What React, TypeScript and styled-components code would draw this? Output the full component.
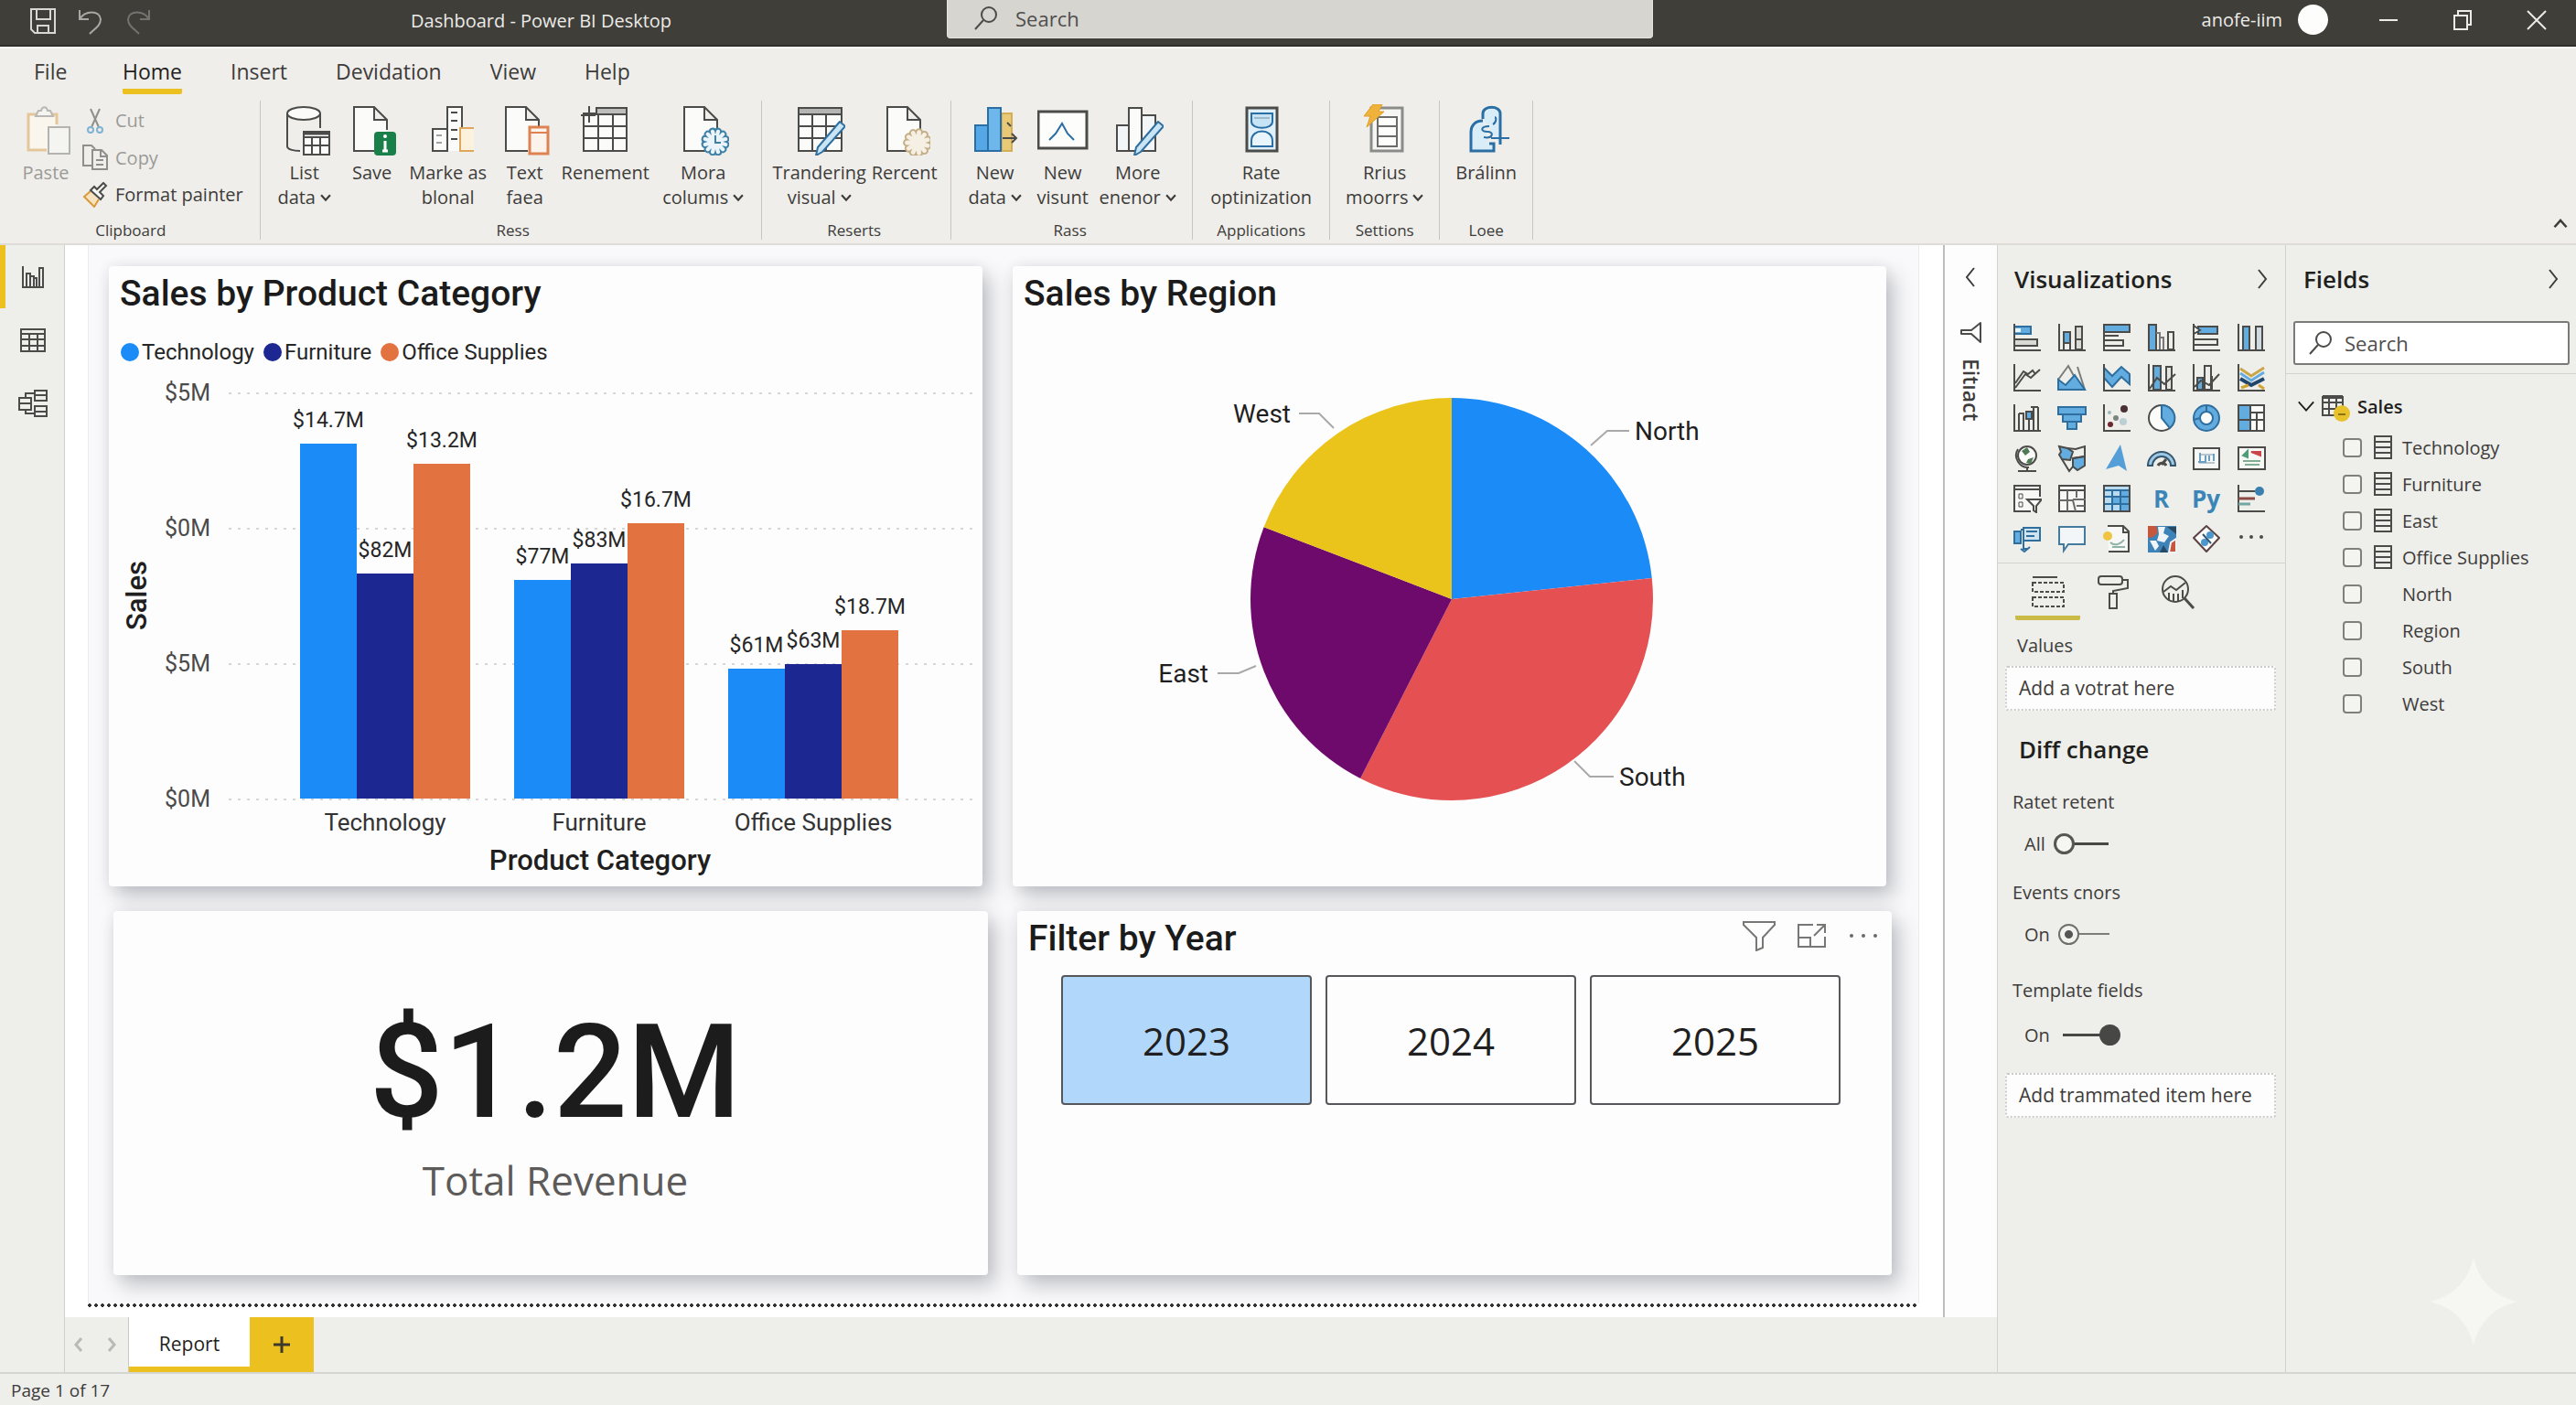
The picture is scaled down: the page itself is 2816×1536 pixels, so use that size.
import React from "react";
import styled, { createGlobalStyle, css } from "styled-components";

const ui = `"Open Sans", "Noto Sans", sans-serif`;
const din = `Roboto, "Liberation Sans", sans-serif`;

const c = {
  bar: "#3f3e39",
  panel: "#eeeeea",
  line: "#d2d2ce",
  ink: "#3d3c3a",
  dark: "#1f1f1e",
  muted: "#9b9b98",
  yellow: "#ebc01f",
  blue: "#1a8bf7",
  navy: "#1c2791",
  orange: "#e2723f",
  icon: "#4b4b49",
  sky: "#62acdf",
  steel: "#2f6f9f",
};

const Global = createGlobalStyle`
  *, *::before, *::after { box-sizing: border-box; }
  body { margin: 0; background: ${c.panel}; color: ${c.ink}; font-family: ${ui}; font-size: 20px; }
  h1, h2, h3, p, ul { margin: 0; padding: 0; font-weight: 400; }
  ul { list-style: none; }
  button, input { font: inherit; color: inherit; }
  button { border: 0; padding: 0; background: none; cursor: pointer; }
  svg { display: block; flex: none; }
`;

const Shell = styled.div`
  display: flex;
  flex-direction: column;
  min-height: 100vh;
`;

/* ---------- title bar ---------- */
const TitleBar = styled.header`
  display: grid;
  grid-template-columns: 449fr 586fr 772fr 1009fr;
  height: 51px;
  background: ${c.bar};
  border-bottom: 2px solid #2e2e2a;
  color: #ecebe8;
`;
const Quick = styled.div`
  display: flex;
  align-items: center;
  gap: 22px;
  padding: 0 0 3px 32px;
`;
const AppTitle = styled.h1`
  font-size: 20px;
  line-height: 46px;
`;
const TopSearch = styled.label`
  display: flex;
  align-items: center;
  gap: 18px;
  height: 42px;
  padding: 0 28px 2px;
  background: #d6d5d0;
  border: 1px solid #e6e5e1;
  border-top: 0;
  border-radius: 0 0 4px 4px;
  color: ${c.ink};
`;
const TextInput = styled.input`
  flex: 1;
  min-width: 0;
  border: 0;
  outline: 0;
  padding: 0;
  background: transparent;
  font-size: 22px;
  line-height: 30px;
  &::placeholder { color: #4f4e4c; opacity: 1; }
`;
const Account = styled.div`
  display: flex;
  align-items: center;
  justify-content: flex-end;
  padding: 0 3px 6px 0;
`;
const Avatar = styled.span`
  width: 33px;
  height: 33px;
  margin: 0 25px 0 17px;
  border-radius: 50%;
  background: #fdfdfb;
`;
const WinBtn = styled.button`
  display: grid;
  place-items: center;
  width: 81px;
  height: 42px;
`;

/* ---------- ribbon ---------- */
const Ribbon = styled.div`
  background: #efeeea;
  border-top: 2px solid #f8f8f4;
  border-bottom: 2px solid #dddcd7;
`;
const Tabs = styled.nav`
  display: flex;
  gap: 53px;
  height: 57px;
  padding-left: 37px;
`;
const Tab = styled.button<{ $on?: boolean }>`
  min-width: 44px;
  height: 50px;
  padding-top: 6px;
  text-align: left;
  font-size: 23px;
  line-height: 32px;
  border-bottom: 6px solid ${(p) => (p.$on ? c.yellow : "transparent")};
  border-radius: 2px;
  color: ${(p) => (p.$on ? c.dark : c.ink)};
  font-weight: ${(p) => (p.$on ? 500 : 400)};
`;
const Groups = styled.div`
  display: flex;
  align-items: flex-start;
  padding-bottom: 4px;
`;
const Group = styled.section<{ $l: number; $r: number }>`
  display: flex;
  flex-direction: column;
  justify-content: space-between;
  height: 152px;
  padding: 4px ${(p) => p.$r}px 0 ${(p) => p.$l}px;
  border-right: 1px solid #c6c5c1;
`;
const GroupRow = styled.div`
  display: flex;
`;
const GroupName = styled.h2`
  font-size: 17px;
  line-height: 20px;
  text-align: center;
`;
const Tool = styled.button<{ $w: number; $off?: boolean }>`
  display: flex;
  flex-direction: column;
  align-items: center;
  gap: 5px;
  width: ${(p) => p.$w}px;
  font-size: 20px;
  line-height: 27px;
  white-space: nowrap;
  color: ${(p) => (p.$off ? c.muted : c.ink)};
`;
const ToolLine = styled.span`
  display: flex;
  align-items: center;
  justify-content: center;
  gap: 5px;
`;
const ClipList = styled.div`
  display: flex;
  flex-direction: column;
  height: 116px;
  justify-content: space-between;
  padding-left: 10px;
`;
const ClipBtn = styled.button<{ $off?: boolean }>`
  display: flex;
  align-items: center;
  gap: 8px;
  height: 35px;
  font-size: 20px;
  white-space: nowrap;
  color: ${(p) => (p.$off ? c.muted : c.ink)};
`;
const Collapse = styled.button`
  align-self: flex-end;
  margin: 0 8px 8px auto;
`;

/* ---------- body ---------- */
const Body = styled.div`
  display: flex;
  flex: 1;
`;
const Rail = styled.nav`
  display: flex;
  flex-direction: column;
  width: 71px;
  background: ${c.panel};
  border-right: 1px solid #cfcfcb;
`;
const RailBtn = styled.button<{ $on?: boolean }>`
  display: grid;
  place-items: center;
  height: 69px;
  padding-right: 4px;
  border-left: 6px solid ${(p) => (p.$on ? c.yellow : "transparent")};
`;
const Work = styled.div`
  display: flex;
  flex-direction: column;
  flex: 1;
  min-width: 0;
`;
const WorkTop = styled.div`
  display: flex;
  flex: 1;
`;
const Canvas = styled.main`
  display: flex;
  flex-direction: column;
  flex: 1;
  padding: 0 26px 11px 25px;
  background: #fff;
`;
const Page = styled.div`
  display: flex;
  flex-direction: column;
  gap: 27px;
  flex: 1;
  padding: 23px 0 31px;
  background: #f9f9fb;
  border-left: 1px solid #ececee;
  border-right: 1px solid #ececee;
`;
const PageEdge = styled.div`
  height: 4px;
  background: radial-gradient(circle at 2px 2px, #333 0 2px, transparent 2px) 0 0 / 7px 4px repeat-x;
`;
const Row = styled.div<{ $l: number; $r: number; $gap: number; $grow?: boolean }>`
  display: grid;
  grid-template-columns: 1fr 1fr;
  gap: ${(p) => p.$gap}px;
  padding: 0 ${(p) => p.$r}px 0 ${(p) => p.$l}px;
  ${(p) => p.$grow && css`flex: 1;`}
`;
const Card = styled.section`
  min-width: 0;
  background: #fdfdfd;
  border-radius: 4px;
  box-shadow: 8px 11px 22px rgba(50, 55, 70, 0.28), 0 0 14px rgba(50, 55, 70, 0.08);
`;
const CardTitle = styled.h2`
  padding: 8px 12px 0;
  font-family: ${din};
  font-weight: 500;
  font-size: 39px;
  line-height: 44px;
  color: #1b1b1b;
`;
const Legend = styled.ul`
  display: flex;
  gap: 10px;
  margin-top: 27px;
  padding-left: 13px;
  font-family: ${din};
  font-size: 24px;
  line-height: 30px;
  color: #262626;
`;
const LegendItem = styled.li<{ $dot: string }>`
  display: flex;
  align-items: center;
  gap: 3px;
  &::before {
    content: "";
    width: 20px;
    height: 20px;
    border-radius: 50%;
    background: ${(p) => p.$dot};
  }
`;
const Chart = styled.svg`
  width: 100%;
  height: auto;
  font-family: ${din};
`;
const Kpi = styled(Card)`
  display: flex;
  flex-direction: column;
  align-items: center;
  justify-content: center;
  gap: 12px;
  padding: 28px 0 0 10px;
`;
const KpiValue = styled.p`
  font-family: ${din};
  font-weight: 500;
  font-size: 142px;
  line-height: 150px;
  color: #1c1c1c;
`;
const KpiLabel = styled.p`
  font-size: 44px;
  line-height: 60px;
  color: #5c5b59;
`;
const SlicerHead = styled.div`
  display: flex;
  align-items: flex-start;
  justify-content: space-between;
`;
const SlicerTools = styled.div`
  display: flex;
  align-items: center;
  gap: 24px;
  padding: 10px 15px 0 0;
`;
const Years = styled.div`
  display: grid;
  grid-template-columns: repeat(3, 1fr);
  gap: 15px;
  padding: 18px 56px 0 48px;
`;
const Year = styled.button<{ $on?: boolean }>`
  height: 142px;
  border: 2px solid #55575b;
  border-radius: 4px;
  background: ${(p) => (p.$on ? "#b1d8fb" : "#fdfdfd")};
  font-size: 42px;
  color: #202020;
`;

const Filters = styled.aside`
  display: flex;
  flex-direction: column;
  align-items: center;
  width: 59px;
  padding-top: 24px;
  background: #fdfdfd;
  border-left: 2px solid #bdbdbb;
`;
const FilterName = styled.h2`
  margin-top: 16px;
  writing-mode: vertical-rl;
  font-size: 23px;
  line-height: 26px;
  font-weight: 600;
`;
const FilterMark = styled.span`
  margin-top: 38px;
`;

const PageTabs = styled.div`
  display: flex;
  height: 60px;
  background: ${c.panel};
`;
const PageNav = styled.div`
  display: flex;
  align-items: center;
  justify-content: center;
  gap: 26px;
  width: 70px;
  padding-right: 4px;
  border-right: 1px solid #c9c9c6;
`;
const PageTab = styled.button`
  width: 132px;
  padding-top: 4px;
  border-bottom: 6px solid ${c.yellow};
  background: #fff;
  font-size: 21px;
  color: ${c.dark};
`;
const AddTab = styled.button`
  display: grid;
  place-items: center;
  width: 70px;
  background: ${c.yellow};
`;

/* ---------- side panels ---------- */
const Panel = styled.aside<{ $w: number }>`
  position: relative;
  width: ${(p) => p.$w}px;
  background: ${c.panel};
  border-left: 1px solid ${c.line};
`;
const PanelHead = styled.div<{ $l: number }>`
  display: flex;
  align-items: center;
  justify-content: space-between;
  height: 73px;
  padding: 0 15px 0 ${(p) => p.$l}px;
`;
const PanelTitle = styled.h2`
  font-size: 26px;
  line-height: 36px;
  font-weight: 600;
  color: ${c.dark};
`;
const VizGrid = styled.div`
  display: grid;
  grid-template-columns: repeat(6, 49px);
  grid-auto-rows: 44px;
  padding: 6px 0 4px 7px;
  border-bottom: 1px solid ${c.line};
`;
const VizBtn = styled.button`
  display: grid;
  place-items: center;
  font-size: 26px;
  line-height: 32px;
  font-weight: 700;
  color: #3b86b8;
`;
const PaneTabs = styled.div`
  display: flex;
  padding-left: 19px;
`;
const PaneTab = styled.button<{ $on?: boolean }>`
  display: grid;
  place-items: center;
  width: 71px;
  height: 62px;
  padding-top: 4px;
  border-bottom: 5px solid ${(p) => (p.$on ? "#c9bb45" : "transparent")};
  border-radius: 2px;
`;
const Label = styled.h3<{ $top: number; $l?: number }>`
  margin-top: ${(p) => p.$top}px;
  padding-left: ${(p) => p.$l ?? 16}px;
  font-size: 20px;
  line-height: 28px;
`;
const Well = styled.div<{ $top: number }>`
  margin: ${(p) => p.$top}px 10px 0 8px;
  padding: 0 13px;
  border: 2px dotted #cbcbc8;
  border-radius: 3px;
  background: #fdfdfd;
  font-size: 21px;
  line-height: 45px;
  white-space: nowrap;
`;
const Section = styled.h2`
  margin-top: 24px;
  padding-left: 23px;
  font-size: 26px;
  line-height: 36px;
  font-weight: 600;
  color: ${c.dark};
`;
const ToggleRow = styled.label<{ $top: number }>`
  display: flex;
  align-items: center;
  gap: 9px;
  height: 28px;
  margin-top: ${(p) => p.$top}px;
  padding-left: 29px;
`;
const Toggle = styled.input<{ $kind: "open" | "dot" | "full" }>`
  appearance: none;
  position: relative;
  width: ${(p) => (p.$kind === "dot" ? 56 : p.$kind === "open" ? 60 : 68)}px;
  height: 24px;
  margin: 0;
  &::before {
    content: "";
    position: absolute;
    top: 11px;
    left: ${(p) => (p.$kind === "full" ? 5 : 20)}px;
    right: ${(p) => (p.$kind === "full" ? 20 : 0)}px;
    height: ${(p) => (p.$kind === "dot" ? 2 : 3)}px;
    background: ${(p) => (p.$kind === "dot" ? "#7c7c7a" : "#474745")};
  }
  &::after {
    content: "";
    position: absolute;
    top: 1px;
    width: 23px;
    height: 23px;
    border-radius: 50%;
    ${(p) =>
      p.$kind === "open"
        ? css`left: 0; border: 3px solid #565654; background: #f6f6f3;`
        : p.$kind === "dot"
        ? css`left: 0; border: 2px solid #6e6e6c; background: radial-gradient(circle, #565654 0 4px, #f2f2ee 5px);`
        : css`right: 0; background: #474745;`}
  }
`;

const FieldSearch = styled.label`
  display: flex;
  align-items: center;
  gap: 12px;
  height: 48px;
  margin: 10px 7px 9px 8px;
  padding: 0 14px;
  border: 2px solid #7a7a78;
  border-radius: 3px;
  background: #fff;
`;
const Tree = styled.div`
  padding: 10px 0 0 12px;
  border-top: 1px solid ${c.line};
`;
const TreeHead = styled.button`
  display: flex;
  align-items: center;
  gap: 5px;
  height: 50px;
  font-size: 20px;
  font-weight: 600;
  color: ${c.dark};
`;
const FieldRow = styled.label`
  display: flex;
  align-items: center;
  height: 40px;
  padding-left: 50px;
  font-size: 20px;
`;
const FieldIcon = styled.span`
  width: 31px;
  margin-left: 13px;
`;
const Check = styled.input`
  appearance: none;
  width: 21px;
  height: 21px;
  margin: 0;
  border: 2px solid #7f7f7d;
  border-radius: 4px;
  background: #f4f4f1;
`;
const Spark = styled.svg`
  position: absolute;
  right: 64px;
  bottom: 29px;
`;
const Status = styled.footer`
  height: 36px;
  padding-left: 12px;
  border-top: 2px solid #d5d5d1;
  background: ${c.panel};
  font-size: 19px;
  line-height: 36px;
`;

/* ---------- icons ---------- */
type Kids = { children: React.ReactNode };
const Big = ({ children }: Kids) => (
  <svg width="56" height="56" viewBox="0 0 56 56" fill="none" stroke={c.icon} strokeWidth="2" aria-hidden>{children}</svg>
);
const Viz = ({ children }: Kids) => (
  <svg width="32" height="32" viewBox="0 0 32 32" fill="none" stroke={c.icon} strokeWidth="2" aria-hidden>{children}</svg>
);
const Chevron = ({ d, size = 22, w = 2 }: { d: "l" | "r" | "u" | "d"; size?: number; w?: number }) => {
  const path = { l: "M14 1L6 11l8 10", r: "M8 1l8 10-8 10", u: "M3 15l8-9 8 9", d: "M2 6l9 10 9-10" }[d];
  return (
    <svg width={size} height={size} viewBox="0 0 22 22" fill="none" stroke="currentColor" strokeWidth={w} aria-hidden>
      <path d={path} />
    </svg>
  );
};
const Lens = ({ size = 28 }: { size?: number }) => (
  <svg width={size} height={size} viewBox="0 0 28 28" fill="none" stroke={c.icon} strokeWidth="2" aria-hidden>
    <circle cx="17" cy="10" r="8" />
    <path d="M11 16L2 26" />
  </svg>
);

const Doc = ({ x = 8 }: { x?: number }) => (
  <path d={`M${x + 24} 51H${x}V3H${x + 22}L${x + 36} 17V28M${x + 22} 3V17H${x + 36}`} fill="#fbfbf9" />
);
const Pencil = () => (
  <path d="M50 19l6 5-25 28-7 4 2-9z" fill="#c9e4f5" stroke={c.steel} strokeLinejoin="round" />
);
const scallop = (cx: number, cy: number, r: number, n: number) =>
  Array.from({ length: n }, (_, i) => {
    const a = (i / n) * Math.PI * 2;
    const p = `${(cx + r * Math.cos(a)).toFixed(1)} ${(cy + r * Math.sin(a)).toFixed(1)}`;
    return i ? `A3 3 0 0 1 ${p}` : `M${p}`;
  }).join("") + `A3 3 0 0 1 ${cx + r} ${cy}Z`;

const ribbonIcons = {
  list: (
    <Big>
      <path d="M9 10v36c0 3 6 5 14 5M45 10v16" />
      <ellipse cx="27" cy="10" rx="18" ry="7" fill="#fbfbf9" />
      <rect x="27" y="30" width="28" height="25" fill="#fbfbf9" />
      <path d="M27 36h28M36 36v19M45 36v19M27 45h28" />
      <path d="M27 32h28" strokeWidth="3" />
    </Big>
  ),
  save: (
    <Big>
      <Doc />
      <rect x="30" y="30" width="24" height="26" rx="4" fill="#1a8049" stroke="none" />
      <path d="M42 40v11M39 51h6" stroke="#fff" strokeWidth="3" />
      <circle cx="42" cy="35" r="2" fill="#fff" stroke="none" />
    </Big>
  ),
  marke: (
    <Big>
      <path d="M27 51H11V27h16zM27 51V3h16v48" fill="#fbfbf9" />
      <path d="M15 34h6M15 42h6" strokeWidth="1" />
      <path d="M31 9h7M31 18h7M31 28h7M31 38h7" />
      <rect x="41" y="26" width="16" height="25" fill="#fbf1dd" stroke="#dfa75c" />
    </Big>
  ),
  text: (
    <Big>
      <Doc x={7} />
      <rect x="33" y="25" width="20" height="29" fill="#fbf3ec" stroke="#dd8250" strokeWidth="3" />
      <path d="M33 31h20" stroke="#dd8250" />
    </Big>
  ),
  rename: (
    <Big>
      <rect x="4" y="10" width="47" height="41" fill="#fbfbf9" />
      <path d="M18 4h33v7H18z" fill="#bdbdbb" />
      <path d="M4 24h47M4 37h47M20 10v41M36 10v41M1 12h16M10 2v18" />
    </Big>
  ),
  more: (
    <Big>
      <Doc x={7} />
      <path d={scallop(41, 41, 12, 12)} fill="#eaf4fa" stroke="#3d7fa5" />
      <path d="M41 34v8h6" stroke="#3d7fa5" />
    </Big>
  ),
  trend: (
    <Big>
      <rect x="5" y="4" width="47" height="47" fill="#fbfbf9" />
      <path d="M5 4h47v7H5z" fill="#b4b4b2" />
      <path d="M5 24h47M5 37h47M20 11v40M35 11v40" />
      <Pencil />
    </Big>
  ),
  recent: (
    <Big>
      <Doc x={9} />
      <path d={scallop(42, 42, 12, 11)} fill="#f5efe4" stroke="#c3ae85" />
    </Big>
  ),
  newData: (
    <Big>
      <rect x="35" y="10" width="11" height="41" fill="#e8c977" stroke="#d3ae55" />
      <rect x="6" y="23" width="14" height="28" fill="#55a8e6" stroke="#2b6ea3" />
      <rect x="20" y="4" width="14" height="47" fill="#6db7ec" stroke="#2b6ea3" />
      <path d="M36 37h14M46 32l5 5-5 5M41 20l4 4" />
    </Big>
  ),
  newVisual: (
    <Big>
      <rect x="1" y="8" width="53" height="40" fill="#fdfdfc" strokeWidth="3" />
      <path d="M13 39l7-7 7-11 6 11 7 7" stroke="#2b6ea3" strokeWidth="2" />
    </Big>
  ),
  moreBars: (
    <Big>
      <path d="M18 51H5V23h13zM32 12h15v39H32z" fill="#f3f6f8" />
      <rect x="18" y="4" width="14" height="47" fill="#fbfbf9" />
      <Pencil />
    </Big>
  ),
  rate: (
    <Big>
      <rect x="12" y="4" width="33" height="47" fill="#dff0fa" strokeWidth="3" />
      <path d="M17 10h23v9c0 9-23 9-23 0z" fill="#c7e4f6" stroke="#2b6ea3" />
      <path d="M17 46h23v-6c0-14-23-14-23 0z" fill="#e9f5fc" stroke="#2b6ea3" />
      <path d="M20 15h17" stroke="#9db9ca" />
    </Big>
  ),
  rrius: (
    <Big>
      <rect x="13" y="4" width="34" height="47" fill="#f6f6f4" stroke="#8b8b89" strokeWidth="3" />
      <path d="M20 14h21v32H20zM20 24h21M20 35h21" fill="#fdfdfc" stroke="#6b6b69" />
      <path d="M15 0h10l-4 8h6L8 25l4-12H5z" fill="#efb23a" stroke="#e09d25" strokeWidth="1" />
    </Big>
  ),
  bralinn: (
    <Big>
      <path d="M24 16V10c0-9 19-9 19 0v34M24 18c-9 0-13 6-13 12v21h25v-8h-5" fill="#d9edf9" stroke="#2b6ea3" strokeWidth="3" />
      <path d="M31 24c-10 0-10 6-2 6s6 8-4 6M33 37h20M35 22c4-2 4-8 2-8" stroke="#2b6ea3" />
    </Big>
  ),
};

const axis = <path d="M2 1v29h29" />;
const B = c.sky;
const vizIcons: [string, React.ReactNode][] = [
  ["Stacked bar chart", <Viz><rect x="2" y="4" width="18" height="8" fill={B} stroke={c.steel} /><rect x="3" y="6" width="6" height="4" fill="#eaf4fb" stroke="none" /><rect x="2" y="18" width="25" height="7" fill="#d9d9d6" />{axis}</Viz>],
  ["Stacked column chart", <Viz><rect x="7" y="10" width="7" height="12" fill={B} /><path d="M7 22v7M14 22v7" /><rect x="20" y="4" width="7" height="25" fill="#d9d9d6" /><path d="M20 18h7" />{axis}</Viz>],
  ["Clustered bar chart", <Viz><rect x="2" y="2" width="28" height="8" fill={B} /><path d="M2 14h16M2 19h21v6H2" />{axis}</Viz>],
  ["Clustered column chart", <Viz><rect x="2" y="2" width="8" height="28" fill={B} /><path d="M10 11h4v5h4v14M14 16v14" stroke="#77777a" /><rect x="23" y="10" width="6" height="19" />{axis}</Viz>],
  ["100% bar chart", <Viz><rect x="7" y="4" width="21" height="8" fill={B} /><path d="M2 3l7 5-7 4z" fill="#fff" /><rect x="2" y="18" width="26" height="6" />{axis}</Viz>],
  ["100% column chart", <Viz><rect x="7" y="4" width="7" height="26" fill={B} /><rect x="21" y="4" width="7" height="26" fill="#cddae2" />{axis}</Viz>],
  ["Line chart", <Viz><path d="M3 27L14 12l6 4 10-9M3 22L12 9l5 3 5-4 3 4" strokeWidth="2" />{axis}</Viz>],
  ["Area chart", <Viz><path d="M1 18L12 3l10 18M22 4l8 25" stroke="#7b7b79" /><path d="M1 29V18l8 6 10-11 11 16z" fill={B} stroke={c.steel} /></Viz>],
  ["Stacked area chart", <Viz><path d="M2 5l9 9L21 4l9 8v11l-9-8L11 26 2 16z" fill={B} stroke={c.steel} />{axis}</Viz>],
  ["Line and stacked column", <Viz><rect x="7" y="3" width="8" height="26" fill={B} /><rect x="21" y="4" width="6" height="25" fill="#e3e3e0" /><path d="M3 28l8-12 8 7 12-11" />{axis}</Viz>],
  ["Line and clustered column", <Viz><rect x="6" y="16" width="6" height="13" fill={B} /><rect x="14" y="3" width="7" height="26" fill="#ececea" /><path d="M22 14v15M3 26l7-7 9 5 11-12" />{axis}</Viz>],
  ["Ribbon chart", <Viz><path d="M4 6l12 8L30 5" stroke="#c9a648" strokeWidth="3" /><path d="M4 11l12 8 14-9" stroke={B} strokeWidth="3" /><path d="M4 17l12 7 14-7" stroke="#21466e" strokeWidth="4" /><path d="M5 27l8-3M24 24l6 4" stroke="#d0a432" strokeWidth="3" />{axis}</Viz>],
  ["Waterfall chart", <Viz><path d="M7 11h5v19M7 11v19M14 11h4v19M20 4h3v26M28 4v26M20 4h8" /><rect x="15" y="9" width="6" height="8" fill={B} />{axis}</Viz>],
  ["Funnel chart", <Viz><rect x="1" y="4" width="30" height="8" fill={B} stroke={c.steel} /><rect x="6" y="12" width="20" height="8" fill={B} stroke={c.steel} /><rect x="11" y="20" width="10" height="8" fill={B} stroke={c.steel} /></Viz>],
  ["Scatter chart", <Viz>{axis}<g stroke="none"><circle cx="24" cy="6" r="4" fill="#4a3036" /><circle cx="9" cy="23" r="3" fill="#6a2830" /><circle cx="15" cy="16" r="3" fill="#7d8480" /><circle cx="23" cy="20" r="4" fill="#bcd0d4" /><circle cx="8" cy="10" r="2" fill="#9fb7bb" /></g></Viz>],
  ["Pie chart", <Viz><circle cx="16" cy="16" r="14" fill="#fbfbfa" /><path d="M16 2a14 14 0 0 1 9 25L16 16z" fill={B} stroke={c.steel} /></Viz>],
  ["Donut chart", <Viz><circle cx="16" cy="16" r="14" fill={B} stroke={c.steel} /><circle cx="16" cy="16" r="7" fill="#fbfbfa" stroke={c.steel} /><path d="M16 2v7M2 18l7-2" stroke={c.steel} /></Viz>],
  ["Treemap", <Viz><rect x="2" y="2" width="28" height="28" fill="#fbfbfa" /><rect x="2" y="2" width="13" height="28" fill={B} /><path d="M15 10h15M15 18h15M22 10v20M2 18h13" /></Viz>],
  ["Map", <Viz><circle cx="16" cy="13" r="10" fill="#fbfbfa" /><path d="M10 8l6-4 3 5-5 4zM17 17l6-2-3 7-5-1z" fill="#4f7a55" stroke="none" /><path d="M6 6C0 15 8 27 18 26M6 30h20M16 26v4" /></Viz>],
  ["Filled map", <Viz><path d="M2 3l9 2 6 4-3 9-9-1-3-5 2-3zM17 16l13-2v10l-8 5-5-4z" fill={B} /><path d="M11 5l9 1 10-3v11l-13 2M5 17l8 13 4-5" /></Viz>],
  ["Azure map", <Viz><path d="M20 1L4 28l14-4 9 6z" fill="#559fd8" stroke="none" /></Viz>],
  ["Gauge", <Viz><path d="M1 24a15 15 0 0 1 30 0h-5a10 10 0 0 0-20 0z" fill="#9ec9e6" stroke="#34566d" /><path d="M12 24a5 5 0 0 1 9 0M16 23l5-6" strokeWidth="3" /></Viz>],
  ["Card", <Viz><rect x="2" y="5" width="28" height="23" fill="#f7f7f5" /><path d="M8 12h17M8 21h17" stroke="#b7c6cf" /><path d="M9 10v9M15 13v6M19 13v6M24 11v8M7 20h9" stroke="#6aa0c2" strokeWidth="2" /></Viz>],
  ["KPI", <Viz><rect x="2" y="4" width="29" height="24" fill="#f7f7f5" /><path d="M7 13l5-5v7z" fill="#4d9d77" stroke="#4d9d77" /><path d="M16 9h10v4z" fill="#c9474a" stroke="#c9474a" /><path d="M7 19h19M9 23h16" stroke="#7fae93" /></Viz>],
  ["Slicer", <Viz><path d="M20 30H2V2h28v12" fill="#f7f7f5" /><path d="M2 6h28" strokeWidth="2" /><path d="M7 11h4v5H7zM7 20h4v5H7z" strokeWidth="1" /><path d="M16 17h16l-6 7v7l-3-2v-5z" fill="#fbfbfa" /></Viz>],
  ["Table", <Viz><rect x="2" y="2" width="28" height="28" fill="#f7f7f5" /><path d="M2 7h28" /><path d="M11 7v23M21 7v8M2 18h15l3 12M17 17h14M21 24h9" stroke="#6b6b69" /></Viz>],
  ["Matrix", <Viz><rect x="2" y="2" width="28" height="28" fill="#b9dbf1" /><path d="M11 14h9v8h-9zM20 6h10v24H20z" fill={B} stroke="none" /><path d="M2 7h28M11 7v23M20 7v23M2 14h28M2 22h28" stroke={c.steel} /><rect x="2" y="2" width="28" height="28" /></Viz>],
  ["R visual", "R"],
  ["Python visual", "Py"],
  ["Key influencers", <Viz>{axis}<path d="M2 8h18" /><path d="M2 16h18" stroke="#8c4a45" strokeWidth="3" /><path d="M2 22h13" stroke="#74a6a3" strokeWidth="3" /><circle cx="25" cy="8" r="5" fill="#3a7fae" stroke="none" /></Viz>],
  ["Decomposition tree", <Viz><rect x="12" y="4" width="18" height="14" fill="#cfe3f0" stroke={c.steel} /><path d="M15 8h12M15 13h9" stroke={c.steel} /><rect x="2" y="8" width="7" height="13" fill={B} stroke={c.steel} /><path d="M9 6h3M12 18v9h5M9 27l4 3 6-5" stroke={c.steel} /></Viz>],
  ["Q&A", <Viz><path d="M2 3h28v19H12l-5 7v-7H2z" fill="#f2f6f9" stroke="#457a9f" /></Viz>],
  ["Narrative", <Viz><path d="M6 2h17l6 6v22H7" fill="#f7f7f5" /><path d="M23 2v7h6" /><circle cx="6" cy="13" r="5" fill="#efc440" stroke="none" /><path d="M9 20c5 5 12 1 15-3M11 25h14" stroke="#8fb2a9" /></Viz>],
  ["Power Apps", <Viz><rect x="1" y="2" width="31" height="29" fill="#3d83b8" stroke="none" /><path d="M1 2h9l2 7-5 5-6 1z" fill="#c4573c" stroke="none" /><path d="M12 3h8l-2 7 6 3-5 7-8-2 2-7zM3 18h7l3 6-4 5z" fill="#f0f4f6" stroke="none" /><path d="M22 3h10v8zM18 23l5 8h-9z" fill="#284a63" stroke="none" /><path d="M26 20l6-4v15h-8z" fill="#c4573c" stroke="#f0f4f6" /></Viz>],
  ["Power Automate", <Viz><path d="M16 2l14 13-14 15L2 15z" fill="#fbfbfa" strokeLinejoin="round" stroke="#5b4343" /><circle cx="20" cy="12" r="4" fill="#4c97cb" stroke="none" /><circle cx="14" cy="20" r="4" fill="#4c97cb" stroke="none" /><path d="M12 11l9 10" stroke="#2f5876" /></Viz>],
  ["More visuals", <Viz><g fill={c.icon} stroke="none"><circle cx="5" cy="14" r="2" /><circle cx="16" cy="14" r="2" /><circle cx="27" cy="14" r="2" /></g></Viz>],
];

/* ---------- data ---------- */
type ToolDef = { icon: keyof typeof ribbonIcons; lines: string[]; menu?: boolean; w: number };
const ribbonGroups: { name: string; l: number; r: number; tools: ToolDef[] }[] = [
  { name: "Ress", l: 11, r: 6, tools: [
    { icon: "list", lines: ["List", "data"], menu: true, w: 74 },
    { icon: "save", lines: ["Save"], w: 74 },
    { icon: "marke", lines: ["Marke as", "blonal"], w: 92 },
    { icon: "text", lines: ["Text", "faea"], w: 76 },
    { icon: "rename", lines: ["Renement"], w: 100 },
    { icon: "more", lines: ["Mora", "columıs"], menu: true, w: 114 },
  ] },
  { name: "Reserts", l: 8, r: 12, tools: [
    { icon: "trend", lines: ["Trandering", "visual"], menu: true, w: 110 },
    { icon: "recent", lines: ["Rercent"], w: 76 },
  ] },
  { name: "Rass", l: 11, r: 14, tools: [
    { icon: "newData", lines: ["New", "data"], menu: true, w: 74 },
    { icon: "newVisual", lines: ["New", "visunt"], w: 74 },
    { icon: "moreBars", lines: ["More", "enenor"], menu: true, w: 90 },
  ] },
  { name: "Applications", l: 8, r: 7, tools: [{ icon: "rate", lines: ["Rate", "optinization"], w: 134 }] },
  { name: "Settions", l: 8, r: 7, tools: [{ icon: "rrius", lines: ["Rrius", "moorrs"], menu: true, w: 104 }] },
  { name: "Loee", l: 8, r: 7, tools: [{ icon: "bralinn", lines: ["Brálinn"], w: 86 }] },
];

const series = [
  { name: "Technology", color: c.blue },
  { name: "Furniture", color: c.navy },
  { name: "Office Supplies", color: c.orange },
];
const clusters = [
  { name: "Technology", x: 209, bars: [[388, "$14.7M"], [246, "$82M"], [366, "$13.2M"]] },
  { name: "Furniture", x: 443, bars: [[239, "$77M"], [257, "$83M"], [301, "$16.7M"]] },
  { name: "Office Supplies", x: 677, bars: [[142, "$61M"], [147, "$63M"], [184, "$18.7M"]] },
] as { name: string; x: number; bars: [number, string][] }[];
const grid = [[30, "$5M"], [178, "$0M"], [326, "$5M"], [474, "$0M"]] as [number, string][];

const slices = [
  { name: "North", from: 0, to: 84, color: c.blue, line: "632,144 650,128 674,128", x: 680, y: 128, anchor: "start" },
  { name: "South", from: 84, to: 207, color: "#e55053", line: "614,489 631,506 657,506", x: 663, y: 506, anchor: "start" },
  { name: "East", from: 207, to: 291, color: "#6e0a6b", line: "224,393 247,393 266,385", x: 214, y: 393, anchor: "end" },
  { name: "West", from: 291, to: 360, color: "#eac31b", line: "313,109 335,109 351,125", x: 304, y: 109, anchor: "end" },
] as const;
const wedge = (from: number, to: number) => {
  const p = (deg: number) => {
    const a = (deg * Math.PI) / 180;
    return `${(480 + 220 * Math.sin(a)).toFixed(2)} ${(312 - 220 * Math.cos(a)).toFixed(2)}`;
  };
  return `M480 312L${p(from)}A220 220 0 ${to - from > 180 ? 1 : 0} 1 ${p(to)}Z`;
};

const fields = [
  ["Technology", true], ["Furniture", true], ["East", true], ["Office Supplies", true],
  ["North", false], ["Region", false], ["South", false], ["West", false],
] as [string, boolean][];

const BarChart = () => (
  <Chart viewBox="0 0 955 568" role="img" aria-label="Sales by product category">
    {grid.map(([y, t]) => (
      <g key={y}>
        <line x1="131" x2="945" y1={y} y2={y} stroke="#d6d6d6" strokeWidth="2" strokeDasharray="3 7" />
        <text x="111" y={y + 8} textAnchor="end" fontSize="25" fill="#4a4a4a">{t}</text>
      </g>
    ))}
    {clusters.map((k) => (
      <g key={k.name}>
        {k.bars.map(([h, t], i) => (
          <g key={t}>
            <rect x={k.x + i * 62} y={473 - h} width="62" height={h} fill={series[i].color} />
            <text x={k.x + 31 + i * 62} y={473 - h - 18} textAnchor="middle" fontSize="23" fill="#262626">{t}</text>
          </g>
        ))}
        <text x={k.x + 93} y="508" textAnchor="middle" fontSize="26" fill="#333">{k.name}</text>
      </g>
    ))}
    <text x="537" y="551" textAnchor="middle" fontSize="31" fontWeight="500" fill="#1f1f1f">Product Category</text>
    <text x="0" y="0" transform="translate(41 251) rotate(-90)" textAnchor="middle" fontSize="31" fontWeight="500" fill="#1f1f1f">Sales</text>
  </Chart>
);

const PieChart = () => (
  <Chart viewBox="0 0 955 626" role="img" aria-label="Sales by region">
    {slices.map((s) => <path key={s.name} d={wedge(s.from, s.to)} fill={s.color} />)}
    {slices.map((s) => (
      <g key={s.name}>
        <polyline points={s.line} fill="none" stroke="#a9a9a9" strokeWidth="2" />
        <text x={s.x} y={s.y + 10} textAnchor={s.anchor} fontSize="28" fill="#1f1f1f">{s.name}</text>
      </g>
    ))}
  </Chart>
);

export default function App() {
  return (
    <Shell>
      <Global />
      <TitleBar>
        <Quick>
          <button aria-label="Save">
            <svg width="30" height="30" viewBox="0 0 30 30" fill="none" stroke="#d8d7d3" strokeWidth="2">
              <path d="M2 2h26v26H6l-4-4zM8 2v11h15V2M9 28v-8h12v8" />
            </svg>
          </button>
          <button aria-label="Undo">
            <svg width="30" height="30" viewBox="0 0 30 30" fill="none" stroke="#a9a8a4" strokeWidth="2">
              <path d="M3 3v10h10M3 13C9 3 25 3 26 13c0 7-6 10-12 16" />
            </svg>
          </button>
          <button aria-label="Redo">
            <svg width="30" height="30" viewBox="0 0 30 30" fill="none" stroke="#74736f" strokeWidth="2">
              <path d="M27 3v10H17M27 13C21 3 5 3 4 13c0 7 6 10 12 16" />
            </svg>
          </button>
        </Quick>
        <AppTitle>Dashboard - Power BI Desktop</AppTitle>
        <TopSearch>
          <Lens />
          <TextInput type="text" placeholder="Search" aria-label="Search" />
        </TopSearch>
        <Account>
          <span>anofe-iim</span>
          <Avatar />
          <WinBtn aria-label="Minimize">
            <svg width="22" height="22" viewBox="0 0 22 22" stroke="#ecebe8" strokeWidth="2"><path d="M1 11h20" /></svg>
          </WinBtn>
          <WinBtn aria-label="Restore">
            <svg width="22" height="22" viewBox="0 0 22 22" fill="none" stroke="#ecebe8" strokeWidth="2"><path d="M2 6h14v15H2zM6 6V1h14v15h-4" /></svg>
          </WinBtn>
          <WinBtn aria-label="Close">
            <svg width="22" height="22" viewBox="0 0 22 22" stroke="#ecebe8" strokeWidth="2"><path d="M1 1l20 20M21 1L1 21" /></svg>
          </WinBtn>
        </Account>
      </TitleBar>

      <Ribbon>
        <Tabs>
          {["File", "Home", "Insert", "Devidation", "View", "Help"].map((t) => (
            <Tab key={t} $on={t === "Home"}>{t}</Tab>
          ))}
        </Tabs>
        <Groups>
          <Group $l={20} $r={18}>
            <GroupRow>
              <Tool $w={60} $off>
                <Big>
                  <path d="M40 22V11H9v39h20" fill="#faf6ee" stroke="#e3c79a" strokeWidth="3" />
                  <path d="M17 13l3-6h3c1-5 6-5 7 0h3l3 6z" fill="#f4f4f1" stroke="#b9b8b4" />
                  <rect x="31" y="25" width="23" height="29" fill="#f4f4f1" stroke="#b3b3b0" />
                </Big>
                <ToolLine>Paste</ToolLine>
              </Tool>
              <ClipList>
                <ClipBtn $off>
                  <svg width="28" height="28" viewBox="0 0 28 28" fill="none" stroke="#8f8f8c" strokeWidth="2">
                    <path d="M9 1l9 20M19 1l-9 20" /><circle cx="9" cy="24" r="3" stroke="#7fb2d3" /><circle cx="19" cy="24" r="3" stroke="#7fb2d3" />
                  </svg>
                  Cut
                </ClipBtn>
                <ClipBtn $off>
                  <svg width="28" height="28" viewBox="0 0 28 28" fill="none" stroke="#8f8f8c" strokeWidth="2">
                    <path d="M10 23H1V1h9l4 4M11 6h10l6 6v15H11zM20 6v7h7M15 17h8M15 22h8" />
                  </svg>
                  Copy
                </ClipBtn>
                <ClipBtn>
                  <svg width="28" height="28" viewBox="0 0 28 28" fill="none" stroke={c.icon} strokeWidth="2">
                    <path d="M9 10L2 16l11 11 5-8" fill="#f7e3bf" stroke="#d99a3c" /><path d="M9 9l11 10 3-4-4-4 7-7-3-3-7 7-3-3z" fill="#f7f7f5" />
                  </svg>
                  Format painter
                </ClipBtn>
              </ClipList>
            </GroupRow>
            <GroupName>Clipboard</GroupName>
          </Group>
          {ribbonGroups.map((g) => (
            <Group key={g.name} $l={g.l} $r={g.r}>
              <GroupRow>
                {g.tools.map((t) => (
                  <Tool key={t.icon} $w={t.w}>
                    {ribbonIcons[t.icon]}
                    <span>
                      {t.lines.map((line, i) => (
                        <ToolLine key={line}>
                          {line}
                          {t.menu && i === t.lines.length - 1 && <Chevron d="d" size={12} w={4} />}
                        </ToolLine>
                      ))}
                    </span>
                  </Tool>
                ))}
              </GroupRow>
              <GroupName>{g.name}</GroupName>
            </Group>
          ))}
          <Collapse aria-label="Collapse ribbon"><Chevron d="u" size={18} w={3} /></Collapse>
        </Groups>
      </Ribbon>

      <Body>
        <Rail>
          <RailBtn $on aria-label="Report view">
            <svg width="26" height="26" viewBox="0 0 26 26" fill="none" stroke={c.icon} strokeWidth="2">
              <path d="M2 1v23h23M6 23V9h4v14M10 12h4v11M14 14h3v9M20 23V3h4v20" />
            </svg>
          </RailBtn>
          <RailBtn aria-label="Data view">
            <svg width="28" height="28" viewBox="0 0 28 28" fill="none" stroke={c.icon} strokeWidth="2">
              <path d="M1 2h26v24H1zM1 7h26M1 13h26M1 20h26M10 7v19M19 7v19" />
            </svg>
          </RailBtn>
          <RailBtn aria-label="Model view">
            <svg width="32" height="32" viewBox="0 0 32 32" fill="none" stroke={c.icon} strokeWidth="2">
              <path d="M1 10h13v13H1zM1 16h13M18 2h13v11H18zM18 7h13M18 19h13v11H18zM18 25h13M8 10V5h10M8 23v4h10" />
            </svg>
          </RailBtn>
        </Rail>

        <Work>
          <WorkTop>
            <Canvas>
              <Page>
                <Row $l={22} $r={35} $gap={33}>
                  <Card>
                    <CardTitle>Sales by Product Category</CardTitle>
                    <Legend>
                      {series.map((s) => <LegendItem key={s.name} $dot={s.color}>{s.name}</LegendItem>)}
                    </Legend>
                    <BarChart />
                  </Card>
                  <Card>
                    <CardTitle>Sales by Region</CardTitle>
                    <PieChart />
                  </Card>
                </Row>
                <Row $l={27} $r={29} $gap={32} $grow>
                  <Kpi>
                    <KpiValue>$1.2M</KpiValue>
                    <KpiLabel>Total Revenue</KpiLabel>
                  </Kpi>
                  <Card>
                    <SlicerHead>
                      <CardTitle>Filter by Year</CardTitle>
                      <SlicerTools>
                        <button aria-label="Filter">
                          <svg width="36" height="34" viewBox="0 0 36 34" fill="none" stroke="#777775" strokeWidth="2"><path d="M1 2h34v3L22 19v11l-7 3V19L1 5z" /></svg>
                        </button>
                        <button aria-label="Focus mode">
                          <svg width="32" height="28" viewBox="0 0 32 28" fill="none" stroke="#777775" strokeWidth="2"><path d="M17 2H1v24h29V15M1 16h13v10M18 14L30 2M21 2h9v9" /></svg>
                        </button>
                        <button aria-label="More options">
                          <svg width="32" height="28" viewBox="0 0 32 28" fill="#6a6a68"><circle cx="3" cy="14" r="2" /><circle cx="16" cy="14" r="2" /><circle cx="29" cy="14" r="2" /></svg>
                        </button>
                      </SlicerTools>
                    </SlicerHead>
                    <Years>
                      <Year $on aria-pressed>2023</Year>
                      <Year>2024</Year>
                      <Year>2025</Year>
                    </Years>
                  </Card>
                </Row>
              </Page>
              <PageEdge />
            </Canvas>
            <Filters>
              <Chevron d="l" />
              <FilterMark>
                <svg width="24" height="24" viewBox="0 0 24 24" fill="none" stroke={c.icon} strokeWidth="2"><path d="M22 1v21L12 13H1V9h11z" strokeLinejoin="round" /></svg>
              </FilterMark>
              <FilterName>Eitıact</FilterName>
            </Filters>
          </WorkTop>
          <PageTabs>
            <PageNav>
              <svg width="10" height="16" viewBox="0 0 10 16" fill="none" stroke="#b9b9b6" strokeWidth="3"><path d="M8 1L2 8l6 7" /></svg>
              <svg width="10" height="16" viewBox="0 0 10 16" fill="none" stroke="#b9b9b6" strokeWidth="3"><path d="M2 1l6 7-6 7" /></svg>
            </PageNav>
            <PageTab>Report</PageTab>
            <AddTab aria-label="Add page">
              <svg width="20" height="20" viewBox="0 0 20 20" stroke="#3c3a2c" strokeWidth="3"><path d="M10 1v18M1 10h18" /></svg>
            </AddTab>
          </PageTabs>
        </Work>

        <Panel $w={315}>
          <PanelHead $l={18}>
            <PanelTitle>Visualizations</PanelTitle>
            <Chevron d="r" />
          </PanelHead>
          <VizGrid>
            {vizIcons.map(([name, icon]) => <VizBtn key={name} aria-label={name}>{icon}</VizBtn>)}
          </VizGrid>
          <PaneTabs>
            <PaneTab $on aria-label="Fields">
              <svg width="36" height="36" viewBox="0 0 36 36" fill="none" stroke={c.icon} strokeWidth="2">
                <path d="M1 2h27" /><path d="M1 8h34v10H1zM1 24h34v10H1z" strokeDasharray="4 2" />
              </svg>
            </PaneTab>
            <PaneTab aria-label="Format">
              <svg width="36" height="38" viewBox="0 0 36 38" fill="none" stroke={c.icon} strokeWidth="2">
                <rect x="2" y="2" width="26" height="9" rx="3" /><path d="M28 6h6v9L18 18v3" /><rect x="14" y="21" width="8" height="16" />
              </svg>
            </PaneTab>
            <PaneTab aria-label="Analytics">
              <svg width="38" height="38" viewBox="0 0 38 38" fill="none" stroke={c.icon} strokeWidth="2">
                <circle cx="16" cy="16" r="14" /><path d="M26 26l10 11" strokeWidth="3" /><path d="M3 19l8-6 6 4 10-8M9 28v-8M14 29v-8M19 29v-8M24 26v-9" />
              </svg>
            </PaneTab>
          </PaneTabs>
          <Label $top={14} $l={21}>Values</Label>
          <Well $top={8}>Add a votrat here</Well>
          <Section>Diff change</Section>
          <Label $top={26}>Ratet retent</Label>
          <ToggleRow $top={17}>All <Toggle type="checkbox" role="switch" $kind="open" /></ToggleRow>
          <Label $top={26}>Events cnors</Label>
          <ToggleRow $top={17}>On <Toggle type="checkbox" role="switch" $kind="dot" /></ToggleRow>
          <Label $top={34}>Template fields</Label>
          <ToggleRow $top={20}>On <Toggle type="checkbox" role="switch" defaultChecked $kind="full" /></ToggleRow>
          <Well $top={28}>Add trammated item here</Well>
        </Panel>

        <Panel $w={318}>
          <PanelHead $l={19}>
            <PanelTitle>Fields</PanelTitle>
            <Chevron d="r" />
          </PanelHead>
          <FieldSearch>
            <Lens />
            <TextInput type="text" placeholder="Search" aria-label="Search fields" />
          </FieldSearch>
          <Tree>
            <TreeHead>
              <Chevron d="d" size={20} />
              <svg width="36" height="34" viewBox="0 0 36 34" fill="none" stroke={c.icon} strokeWidth="2">
                <path d="M3 7h22v20H3zM3 13h22M3 20h22M10 7v20M18 7v20" /><path d="M3 7h22" strokeWidth="4" />
                <circle cx="24" cy="25" r="9" fill="#e8c22b" stroke="none" /><path d="M20 26h8" stroke="#8a7212" />
              </svg>
              Sales
            </TreeHead>
            {fields.map(([name, table]) => (
              <FieldRow key={name}>
                <Check type="checkbox" />
                <FieldIcon>
                  {table && (
                    <svg width="20" height="26" viewBox="0 0 20 26" fill="none" stroke={c.icon} strokeWidth="2">
                      <path d="M1 1h18v24H1zM1 7h18M1 13h18M1 19h18" />
                    </svg>
                  )}
                </FieldIcon>
                {name}
              </FieldRow>
            ))}
          </Tree>
          <Spark width="96" height="96" viewBox="0 0 96 96" fill="#f6f7f3" aria-hidden>
            <path d="M48 0c5 22 20 42 48 48-28 6-43 26-48 48-5-22-20-42-48-48 28-6 43-26 48-48z" />
          </Spark>
        </Panel>
      </Body>
      <Status>Page 1 of 17</Status>
    </Shell>
  );
}
